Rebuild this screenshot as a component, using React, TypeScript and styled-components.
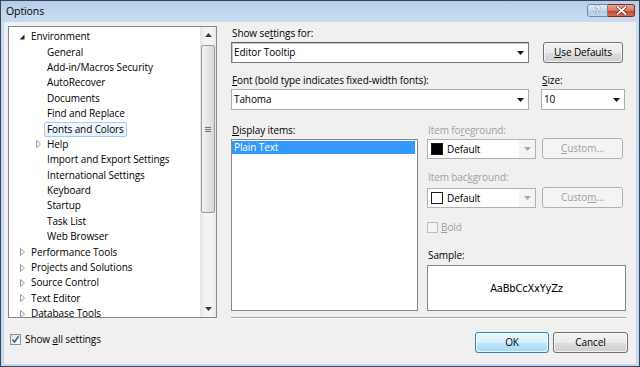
import React from 'react';
import styled, { createGlobalStyle } from 'styled-components';

const GlobalStyle = createGlobalStyle`
  html, body {
    margin: 0;
    padding: 0;
    background: #ffffff;
  }
  body {
    font-family: "Open Sans", "Noto Sans", sans-serif;
    font-size: 10px;
    letter-spacing: -0.1px;
    color: #000000;
  }
  * {
    box-sizing: border-box;
  }
`;

type TreeNode = {
  label: string;
  level: number;
  expander?: 'open' | 'closed';
  selected?: boolean;
};

const treeNodes: TreeNode[] = [
  { label: 'Environment', level: 0, expander: 'open' },
  { label: 'General', level: 1 },
  { label: 'Add-in/Macros Security', level: 1 },
  { label: 'AutoRecover', level: 1 },
  { label: 'Documents', level: 1 },
  { label: 'Find and Replace', level: 1 },
  { label: 'Fonts and Colors', level: 1, selected: true },
  { label: 'Help', level: 1, expander: 'closed' },
  { label: 'Import and Export Settings', level: 1 },
  { label: 'International Settings', level: 1 },
  { label: 'Keyboard', level: 1 },
  { label: 'Startup', level: 1 },
  { label: 'Task List', level: 1 },
  { label: 'Web Browser', level: 1 },
  { label: 'Performance Tools', level: 0, expander: 'closed' },
  { label: 'Projects and Solutions', level: 0, expander: 'closed' },
  { label: 'Source Control', level: 0, expander: 'closed' },
  { label: 'Text Editor', level: 0, expander: 'closed' },
  { label: 'Database Tools', level: 0, expander: 'closed' },
];

export default function App() {
  return (
    <>
      <GlobalStyle/>
      <Window>
        <TitleBar>
          <Title>Options</Title>
          <HelpButton>?</HelpButton>
          <CloseButton>
            <svg width="11" height="9" viewBox="0 0 11 9">
              <path d="M1.5 1 L9.5 8 M9.5 1 L1.5 8" stroke="#7a2a20" strokeWidth="3.2" strokeLinecap="square"/>
              <path d="M1.5 1 L9.5 8 M9.5 1 L1.5 8" stroke="#ffffff" strokeWidth="1.8" strokeLinecap="square"/>
            </svg>
          </CloseButton>
        </TitleBar>
        <Client>
          <LeftColumn>
            <TreeBox>
              <TreeList>
                {treeNodes.map((node) => (
                  <TreeRow key={node.label} $level={node.level}>
                    <Expander>
                      {node.expander === 'open' && (
                        <svg width="6" height="6" viewBox="0 0 6 6">
                          <polygon points="5.5,0.5 5.5,5.5 0.5,5.5" fill="#262626"/>
                        </svg>
                      )}
                      {node.expander === 'closed' && (
                        <svg width="5" height="8" viewBox="0 0 5 8">
                          <polygon points="0.5,0.5 4.5,4 0.5,7.5" fill="none" stroke="#9a9a9a"/>
                        </svg>
                      )}
                    </Expander>
                    <TreeLabel $selected={node.selected}>{node.label}</TreeLabel>
                  </TreeRow>
                ))}
              </TreeList>
              <ScrollBar>
                <ScrollArrow>
                  <svg width="7" height="4" viewBox="0 0 7 4">
                    <polygon points="0,4 7,4 3.5,0" fill="#3a3a3a"/>
                  </svg>
                </ScrollArrow>
                <ScrollTrack>
                  <ScrollThumb>
                    <Grip/>
                  </ScrollThumb>
                </ScrollTrack>
                <ScrollArrow>
                  <svg width="7" height="4" viewBox="0 0 7 4">
                    <polygon points="0,0 7,0 3.5,4" fill="#3a3a3a"/>
                  </svg>
                </ScrollArrow>
              </ScrollBar>
            </TreeBox>
            <CheckRow>
              <CheckBox $checked>
                <svg width="9" height="9" viewBox="0 0 9 9">
                  <path d="M1.5 4.5 L3.6 7 L7.6 1.2" fill="none" stroke="#3c5da0" strokeWidth="1.6"/>
                </svg>
              </CheckBox>
              <span>Show <U>a</U>ll settings</span>
            </CheckRow>
          </LeftColumn>

          <RightColumn>
            <Label>Show se<U>t</U>tings for:</Label>
            <Row $gap={14}>
              <Combo $width={298} $height={21} $framed>
                <ComboText>Editor Tooltip</ComboText>
                <ComboArrow><DownArrow/></ComboArrow>
              </Combo>
              <Button $width={80}><U>U</U>se Defaults</Button>
            </Row>

            <LabelRow>
              <Label $width={310}><U>F</U>ont (bold type indicates fixed-width fonts):</Label>
              <Label><U>S</U>ize:</Label>
            </LabelRow>
            <Row $gap={12}>
              <Combo $width={298} $height={21}>
                <ComboText>Tahoma</ComboText>
                <ComboArrow><DownArrow/></ComboArrow>
              </Combo>
              <Combo $width={84} $height={21}>
                <ComboText>10</ComboText>
                <ComboArrow><DownArrow/></ComboArrow>
              </Combo>
            </Row>

            <Lower>
              <ListColumn>
                <Label><U>D</U>isplay items:</Label>
                <ListBox>
                  <ListItem $selected>Plain Text</ListItem>
                </ListBox>
              </ListColumn>

              <SideColumn>
                <Label $disabled>Item fo<U>r</U>eground:</Label>
                <SwatchRow>
                  <Combo $width={109} $height={20} $disabled>
                    <Swatch $color="#000000"/>
                    <ComboText>Default</ComboText>
                    <ComboArrow $disabled><DownArrow $disabled/></ComboArrow>
                  </Combo>
                  <Button $width={81} $disabled><U>C</U>ustom...</Button>
                </SwatchRow>

                <Label $disabled $top={12}>Item bac<U>k</U>ground:</Label>
                <SwatchRow $top={3}>
                  <Combo $width={109} $height={20} $disabled>
                    <Swatch $color="#ffffff"/>
                    <ComboText>Default</ComboText>
                    <ComboArrow $disabled><DownArrow $disabled/></ComboArrow>
                  </Combo>
                  <Button $width={81} $disabled>Custo<U>m</U>...</Button>
                </SwatchRow>

                <BoldRow>
                  <CheckBox $disabled/>
                  <DisabledText><U>B</U>old</DisabledText>
                </BoldRow>

                <Label $top={16}>Sample:</Label>
                <SampleBox>AaBbCcXxYyZz</SampleBox>
              </SideColumn>
            </Lower>

            <Separator/>

            <ButtonRow>
              <Button $width={74} $default>OK</Button>
              <Button $width={75}>Cancel</Button>
            </ButtonRow>
          </RightColumn>
        </Client>
      </Window>
    </>
  );
}

function DownArrow({ $disabled }: { $disabled?: boolean }) {
  return (
    <svg width="7" height="4" viewBox="0 0 7 4">
      <polygon points="0,0 7,0 3.5,4" fill={$disabled ? '#a8a8a8' : '#1a1a1a'}/>
    </svg>
  );
}

const Window = styled.div`
    width: 640px;
    height: 367px;
    border: 1px solid #34465a;
    background: linear-gradient(to bottom, #b4cde8 0px, #c3d7ee 12px, #c8dbef 22px, #c4d8ee 100%);
    display: flex;
    flex-direction: column;
    overflow: hidden;
`;

const TitleBar = styled.div`
    height: 21px;
    flex: none;
    display: flex;
    align-items: flex-start;
    padding: 0 4px 0 5px;
`;

const Title = styled.div`
    flex: 1;
    font-size: 10.5px;
    line-height: 20px;
    color: #000000;
`;

const HelpButton = styled.div`
    margin-top: 3px;
    width: 21px;
    height: 13px;
    border: 1px solid #6d86a3;
    border-radius: 3px 0 0 3px;
    background: linear-gradient(to bottom, #e2ecf7 0%, #c6d8ec 50%, #b1c8e2 51%, #c4d9ee 100%);
    color: #ffffff;
    font-family: "DejaVu Sans", sans-serif;
    font-weight: bold;
    font-size: 10px;
    line-height: 11px;
    text-align: center;
    text-shadow: 0 0 1px #44566c, 0 0 1px #44566c;
`;

const CloseButton = styled.div`
    margin-top: 3px;
    width: 27px;
    height: 13px;
    border: 1px solid #7d2d22;
    border-left: none;
    border-radius: 0 3px 3px 0;
    background: linear-gradient(to bottom, #e4a597 0%, #d47764 50%, #c2432b 51%, #d36d57 100%);
    display: flex;
    align-items: center;
    justify-content: center;
`;

const Client = styled.div`
    flex: 1;
    margin: 0 3px 2px;
    background: #f0f0f0;
    display: flex;
    gap: 14px;
    padding: 4px 8px 0 4px;
`;

const LeftColumn = styled.div`
    width: 209px;
    flex: none;
    display: flex;
    flex-direction: column;
`;

const TreeBox = styled.div`
    height: 292px;
    border: 1px solid #828790;
    background: #ffffff;
    display: flex;
`;

const TreeList = styled.div`
    flex: 1;
    padding-top: 2px;
    overflow: hidden;
`;

const TreeRow = styled.div<{ $level: number }>`
    height: 15.4px;
    display: flex;
    align-items: center;
    padding-left: ${(p) => 7 + p.$level * 16}px;
    white-space: nowrap;
`;

const Expander = styled.div`
    width: 12px;
    height: 12px;
    flex: none;
    display: flex;
    align-items: center;
    justify-content: center;
`;

const TreeLabel = styled.div<{ $selected?: boolean }>`
    padding: 0 2px;
    height: 15px;
    line-height: 13px;
    border: 1px solid ${(p) => (p.$selected ? '#a6c9ef' : 'transparent')};
    border-radius: 2px;
    background: ${(p) => (p.$selected ? 'linear-gradient(to bottom, #f4f9fe, #e6f1fc)' : 'transparent')};
`;

const ScrollBar = styled.div`
    width: 16px;
    flex: none;
    display: flex;
    flex-direction: column;
    background: linear-gradient(to right, #e4e4e4, #f4f4f4 30%, #f4f4f4 70%, #e8e8e8);
`;

const ScrollArrow = styled.div`
    height: 16px;
    display: flex;
    align-items: center;
    justify-content: center;
`;

const ScrollTrack = styled.div`
    flex: 1;
    padding: 2px 1px 0;
`;

const ScrollThumb = styled.div`
    height: 168px;
    border: 1px solid #9b9b9b;
    border-radius: 2px;
    background: linear-gradient(to right, #f1f1f1, #e6e6e6 50%, #d8d8d8);
    display: flex;
    align-items: center;
    justify-content: center;
`;

const Grip = styled.div`
    width: 6px;
    height: 5px;
    border-top: 1px solid #6f6f6f;
    border-bottom: 1px solid #6f6f6f;
    position: relative;

    &::after {
        content: '';
        position: absolute;
        left: 0;
        right: 0;
        top: 1px;
        border-top: 1px solid #6f6f6f;
    }
`;

const CheckRow = styled.div`
    margin-top: 16px;
    height: 11px;
    display: flex;
    align-items: center;
    gap: 4px;
    padding-left: 2px;
    line-height: 13px;
`;

const CheckBox = styled.div<{ $checked?: boolean; $disabled?: boolean }>`
    width: 11px;
    height: 11px;
    flex: none;
    border: 1px solid ${(p) => (p.$disabled ? '#bcbcbc' : '#8e8f8f')};
    background: ${(p) => (p.$disabled ? '#f4f4f4' : 'linear-gradient(135deg, #dcdcdc, #ffffff)')};
    display: flex;
    align-items: center;
    justify-content: center;
`;

const U = styled.span`
    text-decoration: underline;
`;

const RightColumn = styled.div`
    width: 397px;
    flex: none;
    padding-top: 1px;
    display: flex;
    flex-direction: column;
`;

const Label = styled.div<{ $width?: number; $disabled?: boolean; $top?: number }>`
    height: 13px;
    line-height: 13px;
    padding-left: 1px;
    margin-top: ${(p) => p.$top ?? 0}px;
    margin-bottom: 2px;
    white-space: nowrap;
    width: ${(p) => (p.$width ? `${p.$width}px` : 'auto')};
    color: ${(p) => (p.$disabled ? '#a0a0a0' : '#000000')};
`;

const LabelRow = styled.div`
    margin-top: 11px;
    display: flex;
`;

const Row = styled.div<{ $gap: number }>`
    display: flex;
    gap: ${(p) => p.$gap}px;
`;

const Combo = styled.div<{ $width: number; $height: number; $framed?: boolean; $disabled?: boolean }>`
    width: ${(p) => p.$width}px;
    height: ${(p) => p.$height}px;
    border: 1px solid ${(p) => (p.$framed ? '#7a7a7a' : p.$disabled ? '#adb2b5' : '#abadb3')};
    border-top-color: ${(p) => (p.$framed ? '#5f5f5f' : p.$disabled ? '#adb2b5' : '#abadb3')};
    box-shadow: ${(p) => (p.$framed ? 'inset 1px 1px 0 #c8c8c8' : 'none')};
    background: #ffffff;
    display: flex;
    align-items: center;
    padding-left: 2px;
`;

const ComboText = styled.div`
    flex: 1;
    line-height: 13px;
    white-space: nowrap;
`;

const ComboArrow = styled.div<{ $disabled?: boolean }>`
    width: 16px;
    align-self: stretch;
    display: flex;
    align-items: center;
    justify-content: center;
    background: ${(p) => (p.$disabled ? '#f4f4f4' : 'transparent')};
`;

const Button = styled.div<{ $width: number; $disabled?: boolean; $default?: boolean }>`
    width: ${(p) => p.$width}px;
    height: 21px;
    flex: none;
    border: 1px solid ${(p) => (p.$disabled ? '#adb2b5' : p.$default ? '#3c7fb1' : '#707070')};
    border-radius: 3px;
    background: ${(p) =>
        p.$disabled
            ? '#f4f4f4'
            : p.$default
                ? 'linear-gradient(to bottom, #eaf6fd 0%, #d9f0fc 50%, #bee6fd 51%, #a7d9f5 100%)'
                : 'linear-gradient(to bottom, #f2f2f2 0%, #ebebeb 50%, #dddddd 51%, #cfcfcf 100%)'};
    box-shadow: inset 0 0 0 1px ${(p) => (p.$disabled ? '#f4f4f4' : 'rgba(255, 255, 255, 0.7)')};
    color: ${(p) => (p.$disabled ? '#a0a0a0' : '#000000')};
    display: flex;
    align-items: center;
    justify-content: center;
    line-height: 13px;
    white-space: nowrap;
`;

const Lower = styled.div`
    margin-top: 14px;
    display: flex;
    gap: 9px;
`;

const ListColumn = styled.div`
    width: 187px;
    display: flex;
    flex-direction: column;
`;

const ListBox = styled.div`
    height: 172px;
    border: 1px solid #828790;
    background: #ffffff;
    padding: 1px 2px 0 0;
`;

const ListItem = styled.div<{ $selected?: boolean }>`
    height: 13px;
    line-height: 13px;
    padding-left: 2px;
    background: ${(p) => (p.$selected ? '#3399ff' : 'transparent')};
    color: ${(p) => (p.$selected ? '#ffffff' : '#000000')};
`;

const SideColumn = styled.div`
    width: 199px;
    display: flex;
    flex-direction: column;

    & > ${Label} {
        margin-bottom: 1px;
    }
`;

const SwatchRow = styled.div<{ $top?: number }>`
    display: flex;
    align-items: flex-end;
    gap: 6px;
    height: 21px;
    margin-top: ${(p) => (p.$top ? p.$top - 1 : 0)}px;
`;

const Swatch = styled.div<{ $color: string }>`
    width: 12px;
    height: 12px;
    flex: none;
    margin: 0 4px 0 1px;
    border: 1px solid #1a1a1a;
    background: ${(p) => p.$color};
`;

const BoldRow = styled.div`
    margin-top: 14px;
    height: 11px;
    display: flex;
    align-items: center;
    gap: 3px;
    line-height: 13px;
`;

const DisabledText = styled.span`
    color: #a0a0a0;
`;

const SampleBox = styled.div`
    margin-top: 2px;
    height: 46px;
    border: 1px solid #828790;
    background: #ffffff;
    display: flex;
    align-items: center;
    justify-content: center;
    font-family: "DejaVu Sans", sans-serif;
    font-size: 10px;
    letter-spacing: -0.25px;
`;

const Separator = styled.div`
    margin-top: 6px;
    width: 395px;
    border-top: 1px solid #a0a0a0;
    border-bottom: 1px solid #ffffff;
`;

const ButtonRow = styled.div`
    margin-top: 13px;
    display: flex;
    justify-content: flex-end;
    gap: 4px;
`;
